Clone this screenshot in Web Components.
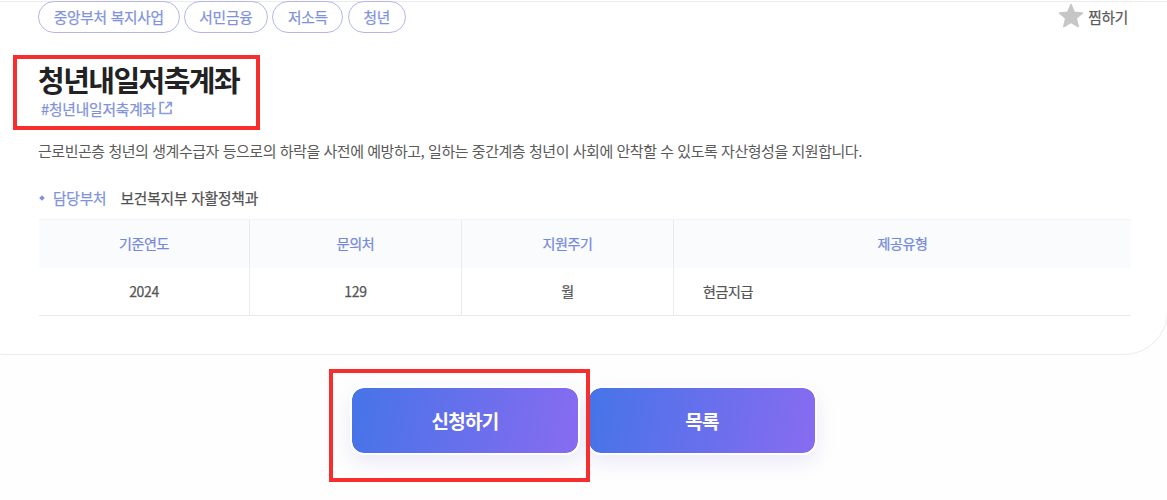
<!DOCTYPE html>
<html lang="ko">
<head>
<meta charset="utf-8">
<title>청년내일저축계좌</title>
<style>
    html, body {
        margin: 0;
        height: 500px;
        overflow: hidden;
        background: #fefefe;
        font-family: "Noto Sans CJK KR", "Noto Sans", sans-serif;
    }
</style>
</head>
<body>
<welfare-page>
    <detail-card>
        <tag-list slot="head">
            <tag-pill style="width: 141.5px">중앙부처 복지사업</tag-pill>
            <tag-pill style="width: 84px">서민금융</tag-pill>
            <tag-pill style="width: 71px">저소득</tag-pill>
            <tag-pill style="width: 58px">청년</tag-pill>
        </tag-list>
        <favorite-button slot="head">찜하기</favorite-button>
        <service-title>
            청년내일저축계좌
            <span slot="link">#청년내일저축계좌</span>
        </service-title>
        <service-summary>근로빈곤층 청년의 생계수급자 등으로의 하락을 사전에 예방하고, 일하는 중간계층 청년이 사회에 안착할 수 있도록 자산형성을 지원합니다.</service-summary>
        <department-line label="담당부처">보건복지부 자활정책과</department-line>
        <info-table></info-table>
    </detail-card>
    <action-button slot="actions" marked>신청하기</action-button>
    <action-button slot="actions">목록</action-button>
</welfare-page>

<script>
class BaseElement extends HTMLElement{
    constructor(){
        super();
        this._shadowDOM = this.attachShadow({mode: "open"});
        this._shadowDOM.innerHTML = `<style>* { box-sizing: border-box; }</style>${this.template()}`;
    }
}

class WelfarePage extends BaseElement{
    template(){
        return `
            <style>
                :host { display: block; }

                .actions {
                    display: flex;
                    justify-content: center;
                    gap: 7px;
                    margin-top: 31px;
                }
            </style>
            <slot></slot>
            <div class="actions"><slot name="actions"></slot></div>`;
    }
}

class DetailCard extends BaseElement{
    template(){
        return `
            <style>
                /* the card is wider than the window on the left */
                :host {
                    display: block;
                    box-sizing: border-box;
                    width: 1207px;
                    height: 354px;
                    margin: 1px 0 0 -39px;
                    padding: 0 39px 0 76px;
                    background: #fff;
                    border: 1px solid #ececee;
                    border-radius: 0 0 44px 44px;
                }

                .head {
                    display: flex;
                    justify-content: space-between;
                    align-items: flex-start;
                    height: 53px;
                    margin-top: -1px;
                }
            </style>
            <div class="head"><slot name="head"></slot></div>
            <slot></slot>`;
    }
}

class TagList extends BaseElement{
    template(){
        return `
            <style>
                :host { display: flex; gap: 4.4px; }
            </style>
            <slot></slot>`;
    }
}

class TagPill extends BaseElement{
    template(){
        return `
            <style>
                :host {
                    display: flex;
                    box-sizing: border-box;
                    align-items: center;
                    justify-content: center;
                    height: 32px;
                    padding-bottom: 2px;
                    border: 1px solid #b4b6ec;
                    border-radius: 16px;
                    color: #7f93dc;
                    font-size: 14.7px;
                    letter-spacing: -0.25px;
                    white-space: nowrap;
                    -webkit-text-stroke: 0.25px;
                }
            </style>
            <slot></slot>`;
    }
}

class FavoriteButton extends BaseElement{
    template(){
        return `
            <style>
                :host {
                    display: flex;
                    align-items: center;
                    gap: 4px;
                    height: 30px;
                    color: #5a5a5a;
                    font-size: 14.7px;
                    letter-spacing: -0.3px;
                    -webkit-text-stroke: 0.25px;
                }

                svg { display: block; }
            </style>
            <svg width="26" height="26" viewBox="0 0 26 26">
                <path d="M13 1.5 16.3 9.2 24.5 9.9 18.3 15.3 20.2 23.6 13 19.3 5.8 23.6 7.7 15.3 1.5 9.9 9.7 9.2Z" fill="#c6c6c6" stroke="#c6c6c6" stroke-width="1.5" stroke-linejoin="round"/>
            </svg>
            <slot></slot>`;
    }
}

class ServiceTitle extends BaseElement{
    template(){
        return `
            <style>
                :host { display: block; position: relative; height: 76px; }

                h1 {
                    margin: 0;
                    padding-top: 7px;
                    color: #222;
                    font-size: 29px;
                    font-weight: bold;
                    line-height: 36px;
                    letter-spacing: -1.55px;
                }

                .link {
                    display: flex;
                    align-items: center;
                    gap: 3px;
                    height: 20px;
                    margin-top: 1px;
                    padding-left: 3px;
                    color: #7f93dc;
                    font-size: 14.7px;
                    letter-spacing: -0.15px;
                    -webkit-text-stroke: 0.25px;
                }

                .mark {
                    position: absolute;
                    left: -25px;
                    top: 1px;
                    width: 247px;
                    height: 75px;
                    border: 4px solid #f62e2e;
                }
            </style>
            <h1><slot></slot></h1>
            <div class="link">
                <slot name="link"></slot>
                <svg width="14" height="14" viewBox="0 0 14 14" fill="none" stroke="#8a9de0" stroke-width="1.7">
                    <path d="M5.5 1.5H1.2V12.5H12V8.5M8 1.5H12.3V5.8M12.1 1.7 6.3 7.5"/>
                </svg>
            </div>
            <div class="mark"></div>`;
    }
}

class ServiceSummary extends BaseElement{
    template(){
        return `
            <style>
                :host {
                    display: block;
                    margin-top: 9px;
                    color: #5a5a5a;
                    font-size: 15px;
                    line-height: 24px;
                    letter-spacing: -0.46px;
                    white-space: nowrap;
                }
            </style>
            <slot></slot>`;
    }
}

class DepartmentLine extends BaseElement{
    template(){
        return `
            <style>
                :host {
                    display: flex;
                    align-items: center;
                    height: 24px;
                    margin: 22px 0 10px;
                    color: #505050;
                    font-size: 14.7px;
                    letter-spacing: -0.15px;
                    -webkit-text-stroke: 0.25px;
                }

                i {
                    width: 4px;
                    height: 4px;
                    margin: 1px 9px 0 2px;
                    background: #7f93dc;
                    transform: rotate(45deg);
                }

                b { margin-right: 14px; color: #7f93dc; font-weight: normal; }
            </style>
            <i></i><b></b><slot></slot>`;
    }

    connectedCallback(){
        this._shadowDOM.querySelector("b").textContent = this.getAttribute("label");
    }
}

class InfoTable extends BaseElement{
    template(){
        return `
            <style>
                :host { display: block; width: 1092px; margin-left: 1px; }

                .row {
                    display: grid;
                    grid-template-columns: 211px 212px 212px 457px;
                    font-size: 14px;
                    letter-spacing: -0.35px;
                    -webkit-text-stroke: 0.25px;
                }

                .row > div {
                    display: flex;
                    align-items: center;
                    justify-content: center;
                    height: 47px;
                    padding-bottom: 1px;
                    border-right: 1px solid #ebebed;
                    color: #555;
                }

                .row > div:last-child { border-right: 0; }

                .head { border-top: 1px solid #f3f4f5; background: #f9fbfd; }

                .head > div { height: 48px; padding-bottom: 2px; color: #7589db; }

                .body { border-bottom: 1px solid #e8e8ea; }

                .body > .type { justify-content: flex-start; padding-left: 29px; }
            </style>
            <div class="row head"><div>기준연도</div><div>문의처</div><div>지원주기</div><div>제공유형</div></div>
            <div class="row body"><div>2024</div><div>129</div><div>월</div><div class="type">현금지급</div></div>`;
    }
}

class ActionButton extends BaseElement{
    template(){
        return `
            <style>
                :host { display: block; position: relative; }

                button {
                    display: block;
                    width: 230px;
                    height: 69px;
                    padding: 0;
                    border: 2px solid #fff;
                    border-radius: 14px;
                    background: linear-gradient(100deg, #4674e8, #886bf0) padding-box;
                    box-shadow: 0 8px 20px rgba(80, 70, 200, 0.11);
                    color: #fff;
                    font: bold 19px "Noto Sans CJK KR", sans-serif;
                    letter-spacing: -0.7px;
                }

                .mark { display: none; }

                :host([marked]) { z-index: 1; }

                :host([marked]) .mark {
                    display: block;
                    position: absolute;
                    left: -21px;
                    top: -17px;
                    width: 261px;
                    height: 113px;
                    border: 4px solid #f62e2e;
                }
            </style>
            <button><slot></slot></button>
            <div class="mark"></div>`;
    }
}

customElements.define("welfare-page", WelfarePage);
customElements.define("detail-card", DetailCard);
customElements.define("tag-list", TagList);
customElements.define("tag-pill", TagPill);
customElements.define("favorite-button", FavoriteButton);
customElements.define("service-title", ServiceTitle);
customElements.define("service-summary", ServiceSummary);
customElements.define("department-line", DepartmentLine);
customElements.define("info-table", InfoTable);
customElements.define("action-button", ActionButton);
</script>
</body>
</html>
